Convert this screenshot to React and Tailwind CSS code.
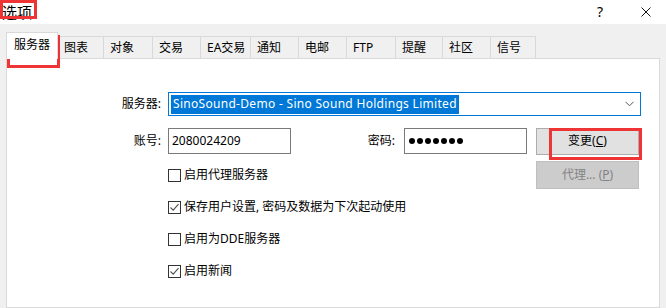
const tabs = [
  { label: "图表", w: "w-[45px]" },
  { label: "对象", w: "w-[49px]" },
  { label: "交易", w: "w-[48px]" },
  { label: "EA交易", w: "w-[50px]" },
  { label: "通知", w: "w-[48px]" },
  { label: "电邮", w: "w-[48px]" },
  { label: "FTP", w: "w-[49px]" },
  { label: "提醒", w: "w-[47px]" },
  { label: "社区", w: "w-[48px]" },
  { label: "信号", w: "w-[46px]" },
];

function Check({ checked, label }) {
  return (
    <div className="flex h-[28px] items-center">
      <div className="flex h-[13px] w-[13px] items-center justify-center border border-[#333333] bg-white">
        {checked && (
          <svg width="11" height="11" viewBox="0 0 11 11" fill="none">
            <path d="M1.5 5.5 L4.2 8.2 L9.5 2.2" stroke="#505050" strokeWidth="1.1" />
          </svg>
        )}
      </div>
      <span className="ml-[3px] text-[12px] text-black">{label}</span>
    </div>
  );
}

export default function App() {
  return (
    <div className="relative flex h-[308px] w-[666px] flex-col overflow-hidden bg-[#f0f0f0] font-['Noto_Sans','Noto_Sans_CJK_SC',sans-serif] text-[12px] leading-none text-black">
      {/* title bar */}
      <div className="flex h-[24px] shrink-0 items-center justify-between bg-white">
        <span className="ml-[2px] text-[15px]">选项</span>
        <div className="flex items-center">
          <span className="mr-[38px] text-[14px]">?</span>
          <svg width="10" height="10" viewBox="0 0 10 10" className="mr-[15px]">
            <path d="M0.5 0.5 L9.5 9.5 M9.5 0.5 L0.5 9.5" stroke="#111" strokeWidth="1" />
          </svg>
        </div>
      </div>

      {/* tabs */}
      <div className="ml-[6px] mt-[8px] flex h-[26px] items-end">
        <div className="relative z-10 -mb-px flex h-[27px] w-[52px] items-start border border-b-0 border-[#d9d9d9] bg-white pl-[7px] pt-[6px]">
          服务器
        </div>
        {tabs.map((t, i) => (
          <div
            key={t.label}
            className={`flex h-[22px] ${t.w} items-start border-l border-t border-[#d9d9d9] pl-[6px] pt-[5px] ${i === tabs.length - 1 ? "border-r" : ""} ${i === 0 ? "border-l-0" : ""}`}
          >
            {t.label}
          </div>
        ))}
      </div>

      {/* panel */}
      <div className="ml-[6px] w-[654px] flex-1 border border-[#d9d9d9] bg-white">
        <div className="mt-[33px] flex h-[24px] items-center">
          <span className="w-[154px] text-right">服务器:</span>
          <div className="ml-[7px] flex h-[24px] w-[473px] items-center justify-between border border-[#0078d7] pl-[2px] pr-[6px]">
            <span className="flex h-[19px] items-center bg-[#0078d7] px-[2px] tracking-[0.3px] text-white">
              SinoSound-Demo - Sino Sound Holdings Limited
            </span>
            <svg width="9" height="6" viewBox="0 0 9 6">
              <path d="M0.5 0.8 L4.5 4.8 L8.5 0.8" stroke="#555" strokeWidth="1" fill="none" />
            </svg>
          </div>
        </div>

        <div className="mt-[12px] flex h-[26px] items-center">
          <span className="w-[154px] text-right">账号:</span>
          <div className="ml-[7px] flex h-[26px] w-[123px] items-center border border-[#7a7a7a] pl-[3px]">
            2080024209
          </div>
          <span className="w-[104px] text-right">密码:</span>
          <div className="ml-[9px] flex h-[26px] w-[123px] items-center gap-[2px] border border-[#7a7a7a] pl-[4px]">
            {[0, 1, 2, 3, 4, 5, 6].map((d) => (
              <span key={d} className="h-[6px] w-[6px] rounded-full bg-black" />
            ))}
          </div>
          <button className="ml-[9px] flex h-[27px] w-[103px] items-center justify-center border border-[#adadad] bg-[#e1e1e1]">
            变更(<span className="underline">C</span>)
          </button>
        </div>

        <div className="mt-[7px] flex">
          <div className="ml-[161px] flex w-[368px] flex-col gap-[4px]">
            <Check label="启用代理服务器" />
            <Check checked label="保存用户设置, 密码及数据为下次起动使用" />
            <Check label="启用为DDE服务器" />
            <Check checked label="启用新闻" />
          </div>
          <button className="flex h-[28px] w-[103px] items-center justify-center border border-[#bfbfbf] bg-[#cccccc] text-[#838383]">
            代理... (<span className="underline">P</span>)
          </button>
        </div>
      </div>

      {/* red annotation boxes */}
      <div className="absolute left-0 top-0 h-[19px] w-[37px] border-[3px] border-[#ee3434]" />
      <div className="absolute left-[7px] top-[35px] h-[33px] w-[53px] border-[3px] border-[#ee3434]" />
      <div className="absolute left-[549px] top-[128px] h-[32px] w-[93px] border-[3px] border-[#ee3434]" />
    </div>
  );
}
